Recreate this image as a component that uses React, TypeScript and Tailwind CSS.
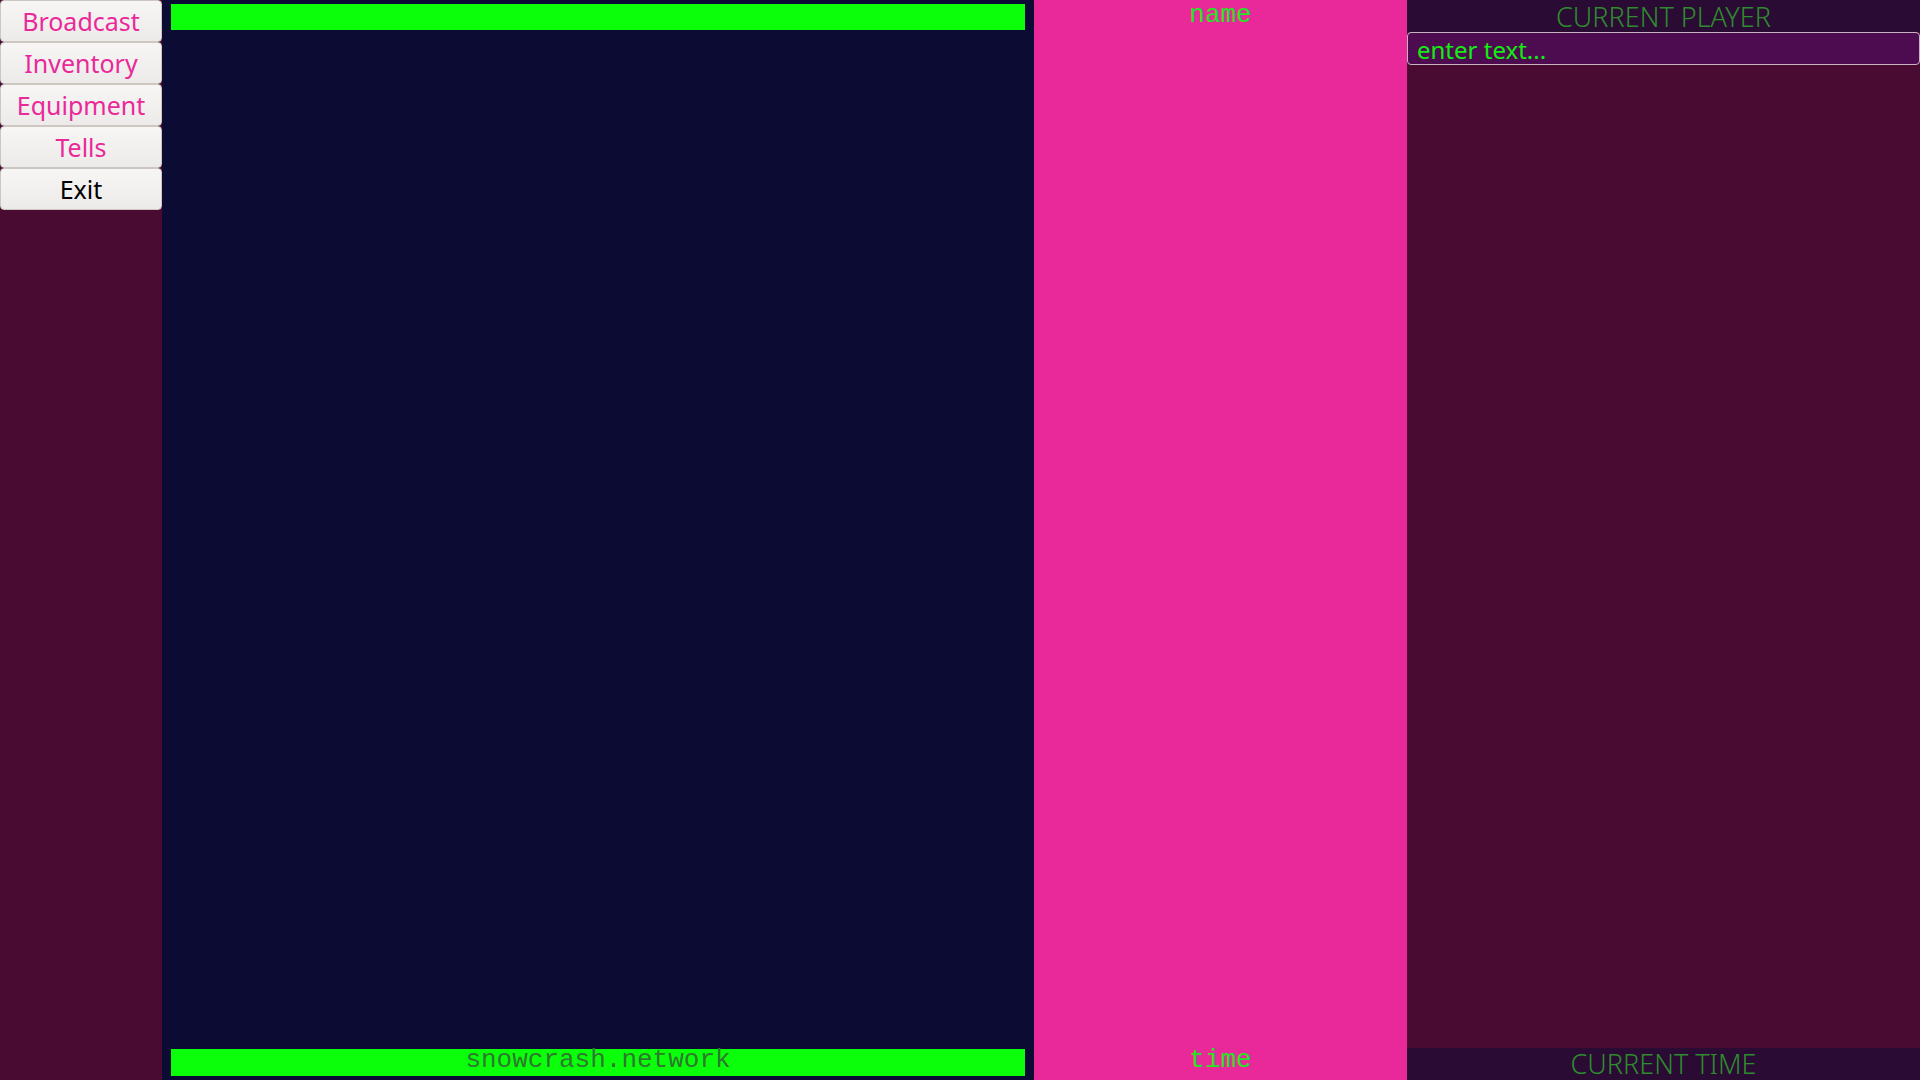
import React from "react";

const menu = [
  { label: "Broadcast", color: "text-[#e9299a]" },
  { label: "Inventory", color: "text-[#e9299a]" },
  { label: "Equipment", color: "text-[#e9299a]" },
  { label: "Tells", color: "text-[#e9299a]" },
  { label: "Exit", color: "text-black" },
];

const sans = "font-['Noto_Sans','Open_Sans',sans-serif]";
const mono = "font-['Liberation_Mono','Courier_New',monospace]";

export default function App() {
  return (
    <div className="flex h-screen w-full overflow-hidden">
      {/* Menu */}
      <aside className="w-[162px] shrink-0 bg-[#4a0b33] flex flex-col">
        {menu.map((m) => (
          <button
            key={m.label}
            className={`h-[42px] w-full border border-[#cdc7c2] rounded-[4px] bg-gradient-to-b from-[#f7f6f5] to-[#ecebe9] text-[25px] leading-none ${sans} ${m.color}`}
          >
            {m.label}
          </button>
        ))}
      </aside>

      {/* Output */}
      <main className="w-[872px] shrink-0 bg-[#0b0b33] flex flex-col justify-between px-[9px] pt-[4px] pb-[4px]">
        <div className="h-[26px] bg-[#0bff0b]" />
        <div
          className={`h-[27px] bg-[#0bff0b] flex items-start justify-center text-[26px] leading-[22px] text-[#2c7a2c] ${mono}`}
        >
          snowcrash.network
        </div>
      </main>

      {/* Players */}
      <section
        className={`w-[373px] shrink-0 bg-[#e9299a] flex flex-col justify-between items-center text-[26px] leading-none text-[#22e622] ${mono}`}
      >
        <div className="pt-[2px]">name</div>
        <div className="pb-[7px]">time</div>
      </section>

      {/* Right panel */}
      <section className={`flex-1 bg-[#4a0b33] flex flex-col ${sans}`}>
        <div className="h-[32px] bg-[#2a0b34] flex items-center justify-center pt-[2px] text-[27px] font-light leading-[30px] text-[#2e8b2e]">
          CURRENT PLAYER
        </div>
        <input
          placeholder="enter text..."
          className="h-[33px] w-full bg-[#4e0c50] border border-[#c9b3c2] rounded-[4px] px-[9px] pt-[2px] text-[24px] leading-none text-[#11ee11] placeholder:text-[#11ee11] outline-none"
        />
        <div className="flex-1" />
        <div className="h-[32px] bg-[#2a0b34] flex items-center justify-center text-[27px] font-light leading-[32px] text-[#2e8b2e]">
          CURRENT TIME
        </div>
      </section>
    </div>
  );
}
